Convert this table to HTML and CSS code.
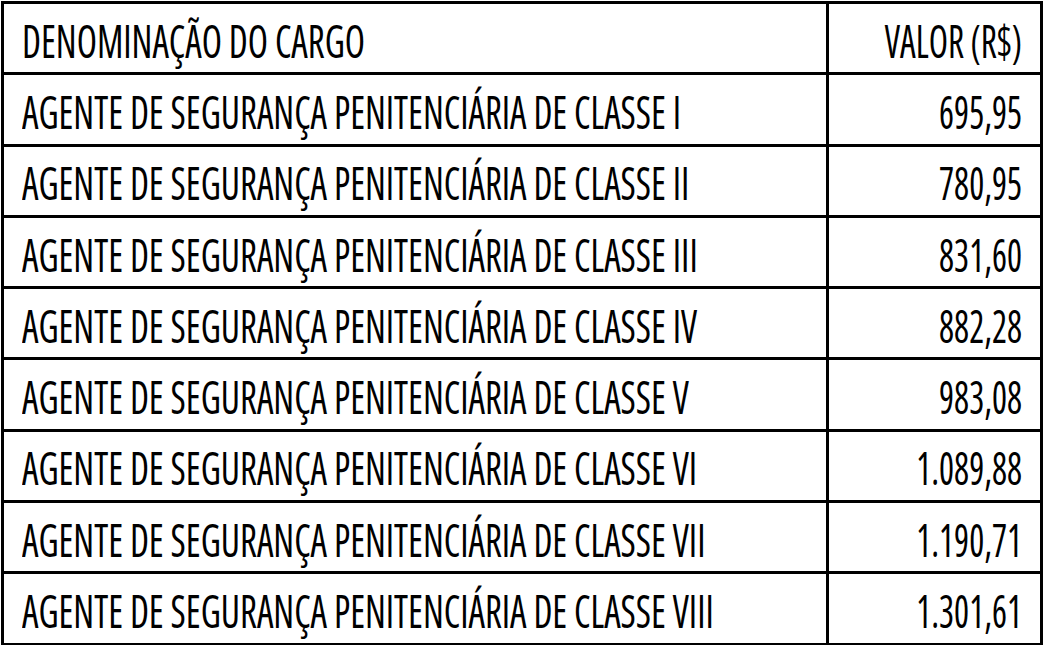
FILE: index.html
```html
<!DOCTYPE html>
<html lang="pt">
<head>
<meta charset="utf-8">
<link rel="stylesheet" href="styles.css">
</head>
<body>
<table class="tabela">
  <tr><td class="cargo"><span class="txt">DENOMINAÇÃO DO CARGO</span></td><td class="valor"><span class="txt">VALOR (R$)</span></td></tr>
  <tr><td class="cargo"><span class="txt">AGENTE DE SEGURANÇA PENITENCIÁRIA DE CLASSE I</span></td><td class="valor"><span class="txt">695,95</span></td></tr>
  <tr><td class="cargo"><span class="txt">AGENTE DE SEGURANÇA PENITENCIÁRIA DE CLASSE II</span></td><td class="valor"><span class="txt">780,95</span></td></tr>
  <tr><td class="cargo"><span class="txt">AGENTE DE SEGURANÇA PENITENCIÁRIA DE CLASSE III</span></td><td class="valor"><span class="txt">831,60</span></td></tr>
  <tr><td class="cargo"><span class="txt">AGENTE DE SEGURANÇA PENITENCIÁRIA DE CLASSE IV</span></td><td class="valor"><span class="txt">882,28</span></td></tr>
  <tr><td class="cargo"><span class="txt">AGENTE DE SEGURANÇA PENITENCIÁRIA DE CLASSE V</span></td><td class="valor"><span class="txt">983,08</span></td></tr>
  <tr><td class="cargo"><span class="txt">AGENTE DE SEGURANÇA PENITENCIÁRIA DE CLASSE VI</span></td><td class="valor"><span class="txt">1.089,88</span></td></tr>
  <tr><td class="cargo"><span class="txt">AGENTE DE SEGURANÇA PENITENCIÁRIA DE CLASSE VII</span></td><td class="valor"><span class="txt">1.190,71</span></td></tr>
  <tr><td class="cargo"><span class="txt">AGENTE DE SEGURANÇA PENITENCIÁRIA DE CLASSE VIII</span></td><td class="valor"><span class="txt">1.301,61</span></td></tr>
</table>
</body>
</html>
```
FILE: styles.css
```css
html, body {
  margin: 0;
  padding: 0;
  background: #fff;
}
body {
  padding: 1px 0 0 1px;
  font-family: "Open Sans", "Liberation Sans", sans-serif;
  font-stretch: 75%;
  color: #000;
}
.tabela {
  border-collapse: collapse;
  width: 1042px;
  table-layout: fixed;
}
.tabela td {
  border: 3px solid #000;
  height: 64.3px;
  padding: 4px 18px 0 18px;
  font-size: 45px;
  line-height: 45px;
  white-space: nowrap;
  vertical-align: middle;
  overflow: visible;
}
.tabela .cargo {
  width: 786px;
}
.tabela .valor {
  text-align: right;
}
.txt {
  display: block;
}
.cargo .txt {
  transform: scaleX(0.825);
  transform-origin: left center;
}
.valor .txt {
  transform: scaleX(0.785);
  transform-origin: right center;
}
```
